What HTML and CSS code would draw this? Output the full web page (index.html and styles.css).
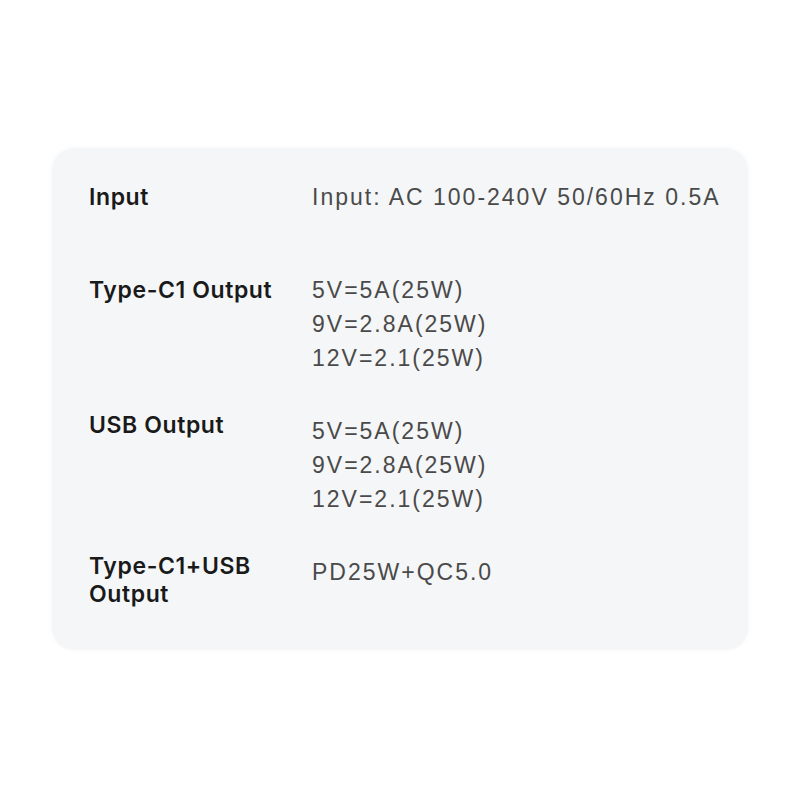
FILE: index.html
```html
<!DOCTYPE html>
<html>
<head>
<meta charset="utf-8">
<link rel="stylesheet" href="styles.css">
</head>
<body>
<div class="card">
  <div class="row row-first">
    <div class="label">Input</div>
    <div class="value">Input: AC 100-240V 50/60Hz 0.5A</div>
  </div>
  <div class="row">
    <div class="label">Type-C1 Output</div>
    <div class="value">5V=5A(25W)<br>9V=2.8A(25W)<br>12V=2.1(25W)</div>
  </div>
  <div class="row">
    <div class="label label-up">USB Output</div>
    <div class="value">5V=5A(25W)<br>9V=2.8A(25W)<br>12V=2.1(25W)</div>
  </div>
  <div class="row">
    <div class="label label-up">Type-C1+USB<br>Output</div>
    <div class="value">PD25W+QC5.0</div>
  </div>
</div>
</body>
</html>
```
FILE: styles.css
```css
html, body {
  margin: 0;
  padding: 0;
  background: #ffffff;
}
body {
  width: 800px;
  height: 800px;
  padding-top: 148px;
  box-sizing: border-box;
}
.card {
  margin-left: 52px;
  width: 696px;
  height: 502px;
  box-sizing: border-box;
  background: #f5f6f8;
  border-radius: 22px;
  box-shadow: 0 0 6px rgba(0,0,0,0.03);
  padding: 32px 0 0 37px;
  display: flex;
  flex-direction: column;
  gap: 39px;
}
.row {
  display: grid;
  grid-template-columns: 223px 1fr;
}
.row-first {
  margin-bottom: 20px;
}
.label {
  font-family: "Inter", "Liberation Sans", sans-serif;
  font-weight: 600;
  font-size: 23px;
  line-height: 28px;
  letter-spacing: 0.6px;
  color: #1a1a1a;
  padding-top: 3px;
}
.label-up {
  padding-top: 0;
  margin-top: -3px;
}
.value {
  font-family: "Liberation Sans", sans-serif;
  font-size: 23px;
  line-height: 34px;
  letter-spacing: 2px;
  color: #4a4a4a;
  white-space: nowrap;
}
```
